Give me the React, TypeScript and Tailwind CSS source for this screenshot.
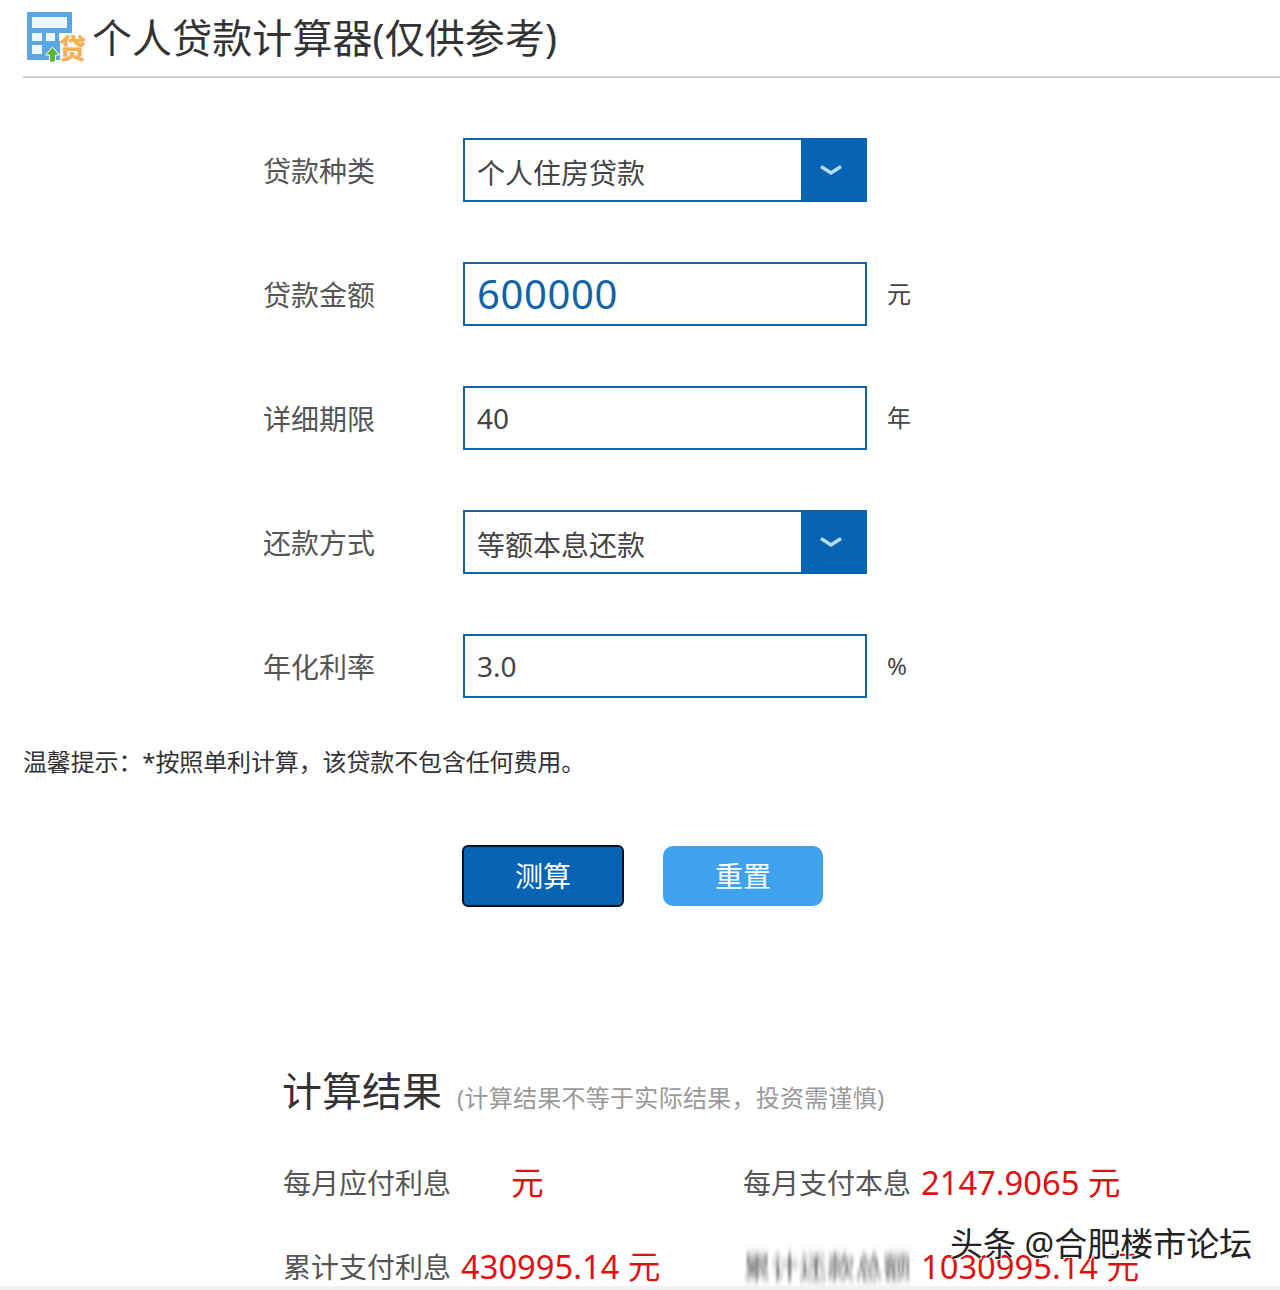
import React from "react";

const font = { fontFamily: '"Noto Sans","Noto Sans CJK SC",sans-serif' };

function Logo() {
  return (
    <svg width="60" height="52" viewBox="0 0 60 52" className="shrink-0 overflow-visible">
      <rect x="0" y="0" width="45" height="48" rx="1" fill="#5aa7e6" />
      <rect x="5" y="5" width="35" height="11" fill="#eef6fd" />
      <rect x="5" y="21" width="10" height="8" fill="#eef6fd" />
      <rect x="19" y="21" width="9" height="8" fill="#eef6fd" />
      <rect x="32" y="21" width="8" height="8" fill="#eef6fd" />
      <rect x="5" y="33" width="10" height="9" fill="#eef6fd" />
      <rect x="33" y="21" width="26" height="29" fill="#ffffff" opacity="0.9" />
      <path d="M18.5 43 L25.5 35 L32.5 43 L28.5 43 L28.5 50 L22.5 50 L22.5 43 Z" fill="#5cb531" stroke="#ffffff" strokeWidth="1" />
      <text x="32" y="47" fontSize="27" fontWeight="900" fill="#f7ae55" style={{ fontFamily: '"Noto Sans CJK SC",sans-serif' }}>贷</text>
    </svg>
  );
}

function Chevron() {
  return (
    <div className="w-[66px] self-stretch -my-[2px] -mr-[2px] bg-[#0763b4] flex items-center justify-center pr-[6px]">
      <svg width="24" height="12" viewBox="0 0 24 12" fill="none">
        <path d="M2 2.5 L12 9 L22 2.5" stroke="#b9dcf6" strokeWidth="3.4" />
      </svg>
    </div>
  );
}

function Row({ label, children, unit }: { label: string; children: React.ReactNode; unit?: string }) {
  return (
    <div className="flex items-center h-[64px]">
      <div className="w-[200px] text-[28px] leading-none text-[#555] mt-[2px]">{label}</div>
      <div className="w-[404px] h-[64px] border-2 border-[#12659f] bg-white flex items-center">{children}</div>
      {unit && <div className="ml-[20px] text-[24px] leading-none text-[#444]">{unit}</div>}
    </div>
  );
}

export default function App() {
  return (
    <div style={font} className="h-[1290px] w-[1280px] overflow-hidden bg-white relative">
      <svg className="absolute w-0 h-0" aria-hidden="true">
        <filter id="smear" x="-5%" y="-30%" width="110%" height="160%">
          <feGaussianBlur stdDeviation="0.8 5" />
        </filter>
      </svg>

      <div className="ml-[23px] h-[78px] border-b-2 border-[#cfcfcf] flex items-start pt-[12px]">
        <div className="ml-[4px] mr-[5px]"><Logo /></div>
        <div className="text-[40px] leading-[52px] text-[#333] tracking-[0.08px]">个人贷款计算器(仅供参考)</div>
      </div>

      <div className="ml-[263px] mt-[60px] flex flex-col gap-[60px]">
        <Row label="贷款种类">
          <div className="flex-1 pl-[12px] text-[28px] leading-none text-[#444] mt-[6px]">个人住房贷款</div>
          <Chevron />
        </Row>
        <Row label="贷款金额" unit="元">
          <div className="pl-[12px] text-[40px] leading-none text-[#0f63a8] tracking-[0.6px]">600000</div>
        </Row>
        <Row label="详细期限" unit="年">
          <div className="pl-[12px] text-[28px] leading-none text-[#444]">40</div>
        </Row>
        <Row label="还款方式">
          <div className="flex-1 pl-[12px] text-[28px] leading-none text-[#444] mt-[6px]">等额本息还款</div>
          <Chevron />
        </Row>
        <Row label="年化利率" unit="%">
          <div className="pl-[12px] text-[28px] leading-none text-[#444]">3.0</div>
        </Row>
      </div>

      <div className="ml-[23px] mt-[49px] text-[24px] leading-[30px] text-[#333] tracking-[-0.13px]">温馨提示：*按照单利计算，该贷款不包含任何费用。</div>

      <div className="ml-[462px] mt-[68px] flex items-center gap-[39px]">
        <button className="w-[162px] h-[62px] rounded-[6px] border-2 border-[#050f1c] bg-[#0763b4] text-white text-[28px] leading-none">测算</button>
        <button className="w-[160px] h-[60px] rounded-[10px] bg-[#3fa2ee] text-white text-[28px] leading-none">重置</button>
      </div>

      <div className="ml-[282px] mt-[154px] flex items-end">
        <div className="text-[40px] leading-[60px] text-[#333]">计算结果</div>
        <div className="ml-[15px] mb-[8px] text-[24px] leading-[30px] text-[#999] tracking-[0.27px]">(计算结果不等于实际结果，投资需谨慎)</div>
      </div>

      <div className="ml-[283px] mt-[42px] grid grid-cols-[460px_auto] gap-y-[44px]">
        <div className="flex items-center h-[40px]">
          <span className="w-[228px] text-[28px] leading-none text-[#555]">每月应付利息</span>
          <span className="text-[32.7px] leading-none text-[#e01010]">元</span>
        </div>
        <div className="flex items-center h-[40px]">
          <span className="w-[178px] text-[28px] leading-none text-[#555]">每月支付本息</span>
          <span className="text-[32.7px] leading-none text-[#e01010]">2147.9065 元</span>
        </div>
        <div className="flex items-center h-[40px]">
          <span className="w-[178px] text-[28px] leading-none text-[#555]">累计支付利息</span>
          <span className="text-[32.7px] leading-none text-[#e01010]">430995.14 元</span>
        </div>
        <div className="flex items-center h-[40px]">
          <span className="w-[178px] text-[28px] leading-none text-[#555] [filter:url(#smear)]">累计还款总额</span>
          <span className="text-[32.7px] leading-none text-[#e01010]">1030995.14 元</span>
        </div>
      </div>

      <div
        className="absolute left-[950px] top-[1224px] text-[33px] leading-[40px] text-[#222] whitespace-nowrap"
        style={{ textShadow: "1px 1px 0 #fff,-1px -1px 0 #fff" }}
      >
        头条 @合肥楼市论坛
      </div>
      <div className="absolute left-0 right-0 bottom-0 h-[4px] bg-[#f1f1f1]" />
    </div>
  );
}
